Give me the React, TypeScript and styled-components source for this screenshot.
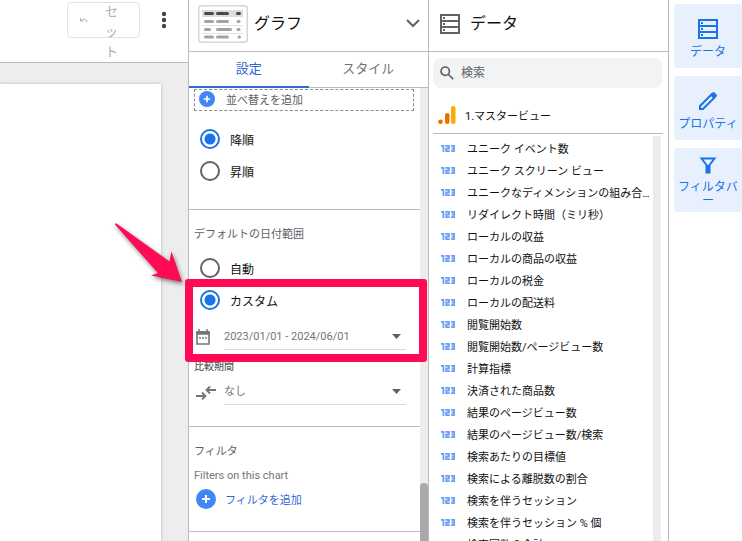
import React from "react";
import styled, { createGlobalStyle } from "styled-components";

const line = "#b9bbc0";
const blue = "#1a73e8";
const grey = "#757575";

const GlobalStyle = createGlobalStyle`
  *, *::before, *::after { box-sizing: border-box; }
  body {
    margin: 0;
    background: #fff;
    color: #111;
    font-family: Roboto, "Noto Sans CJK JP", sans-serif;
    font-size: 11px;
    font-weight: 400;
  }
  button, input, select { font: inherit; color: inherit; margin: 0; }
  button { cursor: pointer; }
  svg { display: block; flex: none; }
`;

const Shell = styled.div`
  display: grid;
  grid-template-columns: minmax(0, 1fr) 240px 240px 74px;
  height: 100vh;
  overflow: hidden;
`;

const Workspace = styled.main`
  display: flex;
  flex-direction: column;
  min-width: 0;
  background: #ededed;
`;

const Toolbar = styled.div`
  display: flex;
  align-items: flex-start;
  justify-content: flex-end;
  gap: 16px;
  height: 63px;
  padding: 2px 16px 0 0;
  background: #fff;
  border-bottom: 1px solid ${line};
`;

const ResetButton = styled.button`
  display: flex;
  align-items: center;
  gap: 16px;
  width: 73px;
  height: 36px;
  padding: 0 20px 0 12px;
  color: #b0b0b0;
  background: #fff;
  border: 1px solid #e3e3e3;
  border-radius: 4px;
  font-size: 13px;
  line-height: 20px;
`;

const ResetLabel = styled.span`
  width: 16px;
  margin-top: 24px;
  word-break: break-all;
`;

const MoreButton = styled.button`
  padding: 8px 0;
  background: none;
  border: 0;
`;

const ReportPage = styled.div`
  flex: 1;
  margin: 21px 27px 0 0;
  background: #fff;
  box-shadow: 0 0 3px rgba(0, 0, 0, 0.25);
`;

const Panel = styled.section`
  position: relative;
  display: flex;
  flex-direction: column;
  min-height: 0;
  min-width: 0;
  background: #fff;
  border-left: 1px solid ${line};
`;

const PanelHeader = styled.header<{ $start: number; $gap: number }>`
  display: flex;
  align-items: center;
  flex: none;
  gap: ${(p) => p.$gap}px;
  height: 52px;
  padding: 0 8px 4px ${(p) => p.$start}px;
  border-bottom: 1px solid ${line};
`;

const PanelTitle = styled.h2`
  flex: 1;
  margin: 0;
  font-size: 16px;
  font-weight: 400;
  line-height: 24px;
`;

const IconButton = styled.button`
  padding: 0;
  background: none;
  border: 0;
`;

const DataIcon = styled.span`
  display: flex;
  color: #616161;
`;

const Tabs = styled.div`
  display: flex;
  flex: none;
  height: 36px;
  border-bottom: 1px solid ${line};
`;

const Tab = styled.button<{ $active?: boolean }>`
  flex: 1;
  height: 36px;
  padding: 0;
  background: none;
  border: 0;
  border-bottom: 2px solid ${(p) => (p.$active ? "#3367d6" : "transparent")};
  color: ${(p) => (p.$active ? "#3367d6" : grey)};
  font-size: 13px;
  line-height: 20px;
`;

const ScrollArea = styled.div`
  display: flex;
  flex: 1;
  min-height: 0;
`;

const DataScroll = styled(ScrollArea)`
  padding-right: 7px;
`;

const Settings = styled.div`
  flex: 1;
  min-width: 0;
  overflow: hidden;
`;

const ScrollTrack = styled.div`
  flex: none;
  width: 8px;
  background: #ececec;
`;

const ScrollThumb = styled.div`
  height: 100%;
  margin-top: 395px;
  background: #a9a9a9;
  border-radius: 4px 4px 0 0;
`;

const Group = styled.section<{ $height: number }>`
  height: ${(p) => p.$height}px;
  padding: 0 5px;
  border-bottom: 1px solid ${line};
`;

const AddSort = styled.button`
  display: flex;
  align-items: center;
  gap: 11px;
  width: 220px;
  height: 22px;
  margin: 1px 0 12px;
  padding: 0 4px 2px;
  color: #616161;
  background: #fff;
  border: 1px dashed #8c8c8c;
`;

const RadioList = styled.div`
  padding-bottom: 8px;
`;

const RangeList = styled(RadioList)`
  padding-top: 9px;
`;

const RadioRow = styled.label`
  display: flex;
  align-items: center;
  gap: 10px;
  height: 32px;
  padding-left: 6px;
  font-size: 12px;
`;

const Radio = styled.input`
  appearance: none;
  width: 20px;
  height: 20px;
  border: 2px solid #5f6368;
  border-radius: 50%;
  background: #fff;
  &:checked {
    border-color: ${blue};
    background: radial-gradient(circle, ${blue} 5px, #fff 6px);
  }
`;

const Caption = styled.h3`
  margin: 0;
  padding-top: 17px;
  color: #616161;
  font-size: 11px;
  font-weight: 400;
  line-height: 16px;
`;

const SmallCaption = styled.label`
  display: block;
  margin-top: 9px;
  color: #616161;
  font-size: 10px;
  font-weight: 500;
  line-height: 16px;
`;

const FieldRow = styled.div`
  display: flex;
  align-items: center;
  gap: 8px;
  padding-right: 9px;
  color: ${grey};
`;

const CompareRow = styled(FieldRow)`
  margin-top: 4px;
`;

const IconSlot = styled.span`
  display: flex;
  width: 22px;
`;

const Field = styled.div`
  display: flex;
  align-items: center;
  flex: 1;
  height: 26px;
  padding-right: 5px;
  border-bottom: 1px solid #dadada;
`;

const DateButton = styled.button`
  display: flex;
  align-items: center;
  justify-content: space-between;
  width: 100%;
  padding: 0;
  background: none;
  border: 0;
`;

const Select = styled.select`
  appearance: none;
  flex: 1;
  padding: 0;
  background: none;
  border: 0;
`;

const Note = styled.p`
  margin: 8px 0 5px;
  color: ${grey};
  line-height: 16px;
`;

const AddFilter = styled.button`
  display: flex;
  align-items: center;
  gap: 9px;
  padding: 0 2px;
  color: #3367d6;
  background: none;
  border: 0;
`;

const Highlight = styled.div`
  position: absolute;
  z-index: 2;
  top: 279px;
  left: -4px;
  width: 242px;
  height: 83px;
  border: 8px solid #ff0a54;
  border-radius: 3px;
  pointer-events: none;
`;

const ArrowMark = styled.svg`
  position: absolute;
  z-index: 2;
  top: 218px;
  left: -79px;
  pointer-events: none;
  filter: drop-shadow(1px 2px 2px rgba(0, 0, 0, 0.5));
`;

const SearchBox = styled.label`
  display: flex;
  align-items: center;
  flex: none;
  gap: 7px;
  height: 30px;
  margin: 6px 6px 0 4px;
  padding: 0 7px;
  color: #616161;
  background: #f1f3f4;
  border-radius: 8px;
`;

const SearchInput = styled.input`
  flex: 1;
  min-width: 0;
  padding: 0;
  background: none;
  border: 0;
  font-size: 12px;
  &::placeholder { color: #616161; opacity: 1; }
`;

const Source = styled.div`
  display: flex;
  align-items: center;
  flex: none;
  gap: 9px;
  height: 46px;
  margin: 0 5px 2px 4px;
  padding: 8px 5px 0;
  border-bottom: 1px solid ${line};
`;

const Fields = styled.ul`
  flex: 1;
  min-width: 0;
  margin: 0;
  padding: 1px 0 0 12px;
  list-style: none;
  overflow: hidden;
`;

const FieldItem = styled.li`
  display: flex;
  align-items: center;
  gap: 12px;
  height: 22px;
`;

const FieldName = styled.span`
  min-width: 0;
  overflow: hidden;
  text-overflow: ellipsis;
  white-space: nowrap;
`;

const Rail = styled.nav`
  display: flex;
  flex-direction: column;
  gap: 8px;
  padding: 4px 0 0 5px;
  background: #fff;
  border-left: 1px solid ${line};
`;

const RailButton = styled.button`
  display: flex;
  flex-direction: column;
  align-items: center;
  justify-content: center;
  gap: 6px;
  width: 100%;
  height: 64px;
  padding: 5px 2px 0;
  color: ${blue};
  background: #e8f0fe;
  border: 0;
  border-radius: 4px;
  font-size: 12px;
  line-height: 14px;
  word-break: break-all;
`;

const PlusIcon = ({ size }: { size: number }) => (
  <svg width={size} height={size} viewBox="0 0 20 20">
    <circle cx="10" cy="10" r="10" fill="#4285f4" />
    <path d="M10 6v8M6 10h8" stroke="#fff" strokeWidth="2" />
  </svg>
);

const StorageIcon = () => (
  <svg width="20" height="20" viewBox="0 0 20 20" fill="none" stroke="currentColor" strokeWidth="2">
    <path d="M1 1h18v18H1zM1 7h18M1 13h18" />
    <path d="M3 4h2M3 10h2M3 16h2" />
  </svg>
);

const NumberIcon = () => (
  <svg width="14" height="7" viewBox="0 0 14 7" fill="none" stroke="#6c9df5" strokeWidth="1.8">
    <path d="M0 .9h2.4V7M4.3.9h3.6v2.6H5.2v2.6h3.6M10 .9h3.2v5.2H10M10.6 3.5h2.6" />
  </svg>
);

const Caret = () => (
  <svg width="9" height="5" viewBox="0 0 9 5" fill="#616161">
    <path d="M0 0h9L4.5 5z" />
  </svg>
);

const TableThumb = () => (
  <svg width="50" height="38" viewBox="0 0 50 38">
    <rect x=".75" y=".75" width="48.5" height="36.5" rx="3" fill="#fff" stroke="#d5d6d9" strokeWidth="1.5" />
    <path d="M4 8.500h41" stroke="#dcdde1" strokeWidth="7" />
    <path d="M4 20.500h41M4 28.500h41" stroke="#e3e3e3" />
    <g strokeWidth="3" strokeLinecap="round">
      <path d="M7.500 8.500h7M19.500 8.500h10M39.500 8.500h2" stroke="#484848" />
      <path d="M7.500 16.500h7M19.500 16.500h10M40 16.500h1M7.500 24.500h4M19.500 24.500h13M40 24.500h1M7.500 32h7M19.500 32h10M41 32h.5" stroke="#a3a3a3" />
    </g>
  </svg>
);

const fieldNames = [
  "ユニーク イベント数",
  "ユニーク スクリーン ビュー",
  "ユニークなディメンションの組み合わせ",
  "リダイレクト時間（ミリ秒）",
  "ローカルの収益",
  "ローカルの商品の収益",
  "ローカルの税金",
  "ローカルの配送料",
  "閲覧開始数",
  "閲覧開始数/ページビュー数",
  "計算指標",
  "決済された商品数",
  "結果のページビュー数",
  "結果のページビュー数/検索",
  "検索あたりの目標値",
  "検索による離脱数の割合",
  "検索を伴うセッション",
  "検索を伴うセッション % 個",
  "検索回数の合計",
];

export default function App() {
  return (
    <>
      <GlobalStyle />
      <Shell>
        <Workspace>
          <Toolbar>
            <ResetButton>
              <svg width="8" height="5" viewBox="0 0 8 5" fill="none" stroke="currentColor">
                <path d="M.5 0v3h3M.5 3C2.5.5 6 .5 7.5 4" />
              </svg>
              <ResetLabel>セット</ResetLabel>
            </ResetButton>
            <MoreButton aria-label="その他">
              <svg width="16" height="20" viewBox="0 0 16 20" fill="#424242">
                <circle cx="8" cy="4" r="2.2" />
                <circle cx="8" cy="10" r="2.2" />
                <circle cx="8" cy="16" r="2.2" />
              </svg>
            </MoreButton>
          </Toolbar>
          <ReportPage />
        </Workspace>

        <Panel>
          <PanelHeader $start={9} $gap={6}>
            <TableThumb />
            <PanelTitle>グラフ</PanelTitle>
            <IconButton aria-label="グラフの種類">
              <svg width="14" height="9" viewBox="0 0 14 9" fill="none" stroke="#616161" strokeWidth="2">
                <path d="M1 1l6 6 6-6" />
              </svg>
            </IconButton>
          </PanelHeader>
          <Tabs role="tablist">
            <Tab role="tab" aria-selected="true" $active>設定</Tab>
            <Tab role="tab" aria-selected="false">スタイル</Tab>
          </Tabs>
          <ScrollArea>
            <Settings>
              <Group $height={121}>
                <AddSort>
                  <PlusIcon size={16} />
                  並べ替えを追加
                </AddSort>
                <RadioList role="radiogroup" aria-label="並べ替え">
                  <RadioRow><Radio type="radio" name="order" defaultChecked />降順</RadioRow>
                  <RadioRow><Radio type="radio" name="order" />昇順</RadioRow>
                </RadioList>
              </Group>
              <Group $height={217}>
                <Caption>デフォルトの日付範囲</Caption>
                <RangeList role="radiogroup" aria-label="デフォルトの日付範囲">
                  <RadioRow><Radio type="radio" name="range" />自動</RadioRow>
                  <RadioRow><Radio type="radio" name="range" defaultChecked />カスタム</RadioRow>
                </RangeList>
                <FieldRow>
                  <IconSlot>
                    <svg width="18" height="16" viewBox="0 0 18 16" fill="none" stroke="#757575">
                      <path d="M3 3h12v12H3z" strokeWidth="1.6" />
                      <path d="M2.200 4h13.600" strokeWidth="3.5" />
                      <path d="M5 0v3M13 0v3" strokeWidth="1.5" />
                      <path d="M5 9h2M8 9h2M11 9h2" strokeWidth="1.5" />
                    </svg>
                  </IconSlot>
                  <Field>
                    <DateButton>
                      2023/01/01 - 2024/06/01
                      <Caret />
                    </DateButton>
                  </Field>
                </FieldRow>
                <SmallCaption htmlFor="compare">比較期間</SmallCaption>
                <CompareRow>
                  <IconSlot>
                    <svg width="22" height="16" viewBox="0 0 22 16" fill="none" stroke="#757575" strokeWidth="1.8">
                      <path d="M2 12h8M8 8.500L11.500 12 8 15.500M22 6h-8M16 2.500L12.500 6 16 9.500" />
                    </svg>
                  </IconSlot>
                  <Field>
                    <Select id="compare"><option>なし</option></Select>
                    <Caret />
                  </Field>
                </CompareRow>
              </Group>
              <Group $height={105}>
                <Caption>フィルタ</Caption>
                <Note>Filters on this chart</Note>
                <AddFilter>
                  <PlusIcon size={20} />
                  フィルタを追加
                </AddFilter>
              </Group>
            </Settings>
            <ScrollTrack><ScrollThumb /></ScrollTrack>
          </ScrollArea>
          <ArrowMark width="80" height="76" viewBox="0 0 80 76" aria-hidden="true">
            <path d="M5 6.500Q4.500 5 6.500 5.500L59.500 43.500 61.500 33.500 72 64 41 57.500 48 55z" fill="#ff0a54" />
          </ArrowMark>
          <Highlight />
        </Panel>

        <Panel>
          <PanelHeader $start={11} $gap={10}>
            <DataIcon><StorageIcon /></DataIcon>
            <PanelTitle>データ</PanelTitle>
          </PanelHeader>
          <SearchBox>
            <svg width="14" height="14" viewBox="0 0 14 14" fill="none" stroke="#616161" strokeWidth="1.7">
              <circle cx="5.200" cy="5.200" r="4.200" />
              <path d="M8.500 8.500l4.700 4.700" />
            </svg>
            <SearchInput type="text" placeholder="検索" aria-label="検索" />
          </SearchBox>
          <Source>
            <svg width="18" height="18" viewBox="0 0 18 18">
              <rect x="13" width="4.500" height="18" rx="2.200" fill="#f9ab00" />
              <rect x="7" y="7" width="4.500" height="11" rx="2.200" fill="#e37400" />
              <circle cx="2.500" cy="15.700" r="2.300" fill="#e37400" />
            </svg>
            1.マスタービュー
          </Source>
          <DataScroll>
            <Fields>
              {fieldNames.map((name) => (
                <FieldItem key={name}>
                  <NumberIcon />
                  <FieldName>{name}</FieldName>
                </FieldItem>
              ))}
            </Fields>
            <ScrollTrack />
          </DataScroll>
        </Panel>

        <Rail>
          <RailButton><StorageIcon />データ</RailButton>
          <RailButton>
            <svg width="20" height="20" viewBox="0 0 20 20" fill="none" stroke="currentColor" strokeWidth="2">
              <path d="M2 18v-3L13.500 3.500l3 3L5 18z" />
              <path d="M12 4l2.500-2.500q1-1 2 0l2 2q1 1 0 2L16 8z" fill="currentColor" stroke="none" />
            </svg>
            プロパティ
          </RailButton>
          <RailButton>
            <svg width="18" height="17" viewBox="0 0 18 17" fill="none" stroke="currentColor" strokeWidth="2">
              <path d="M2.500 1.500h13L10.500 8v7.500h-3V8z" />
              <path d="M9 8v8" />
            </svg>
            フィルタバー
          </RailButton>
        </Rail>
      </Shell>
    </>
  );
}
